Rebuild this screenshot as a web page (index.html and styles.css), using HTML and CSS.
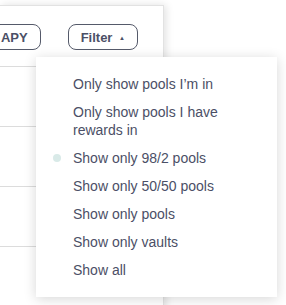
FILE: index.html
```html
<!DOCTYPE html>
<html lang="en">
    <head>
        <meta charset="UTF-8">
        <title>Pools</title>
        <link rel="stylesheet" href="styles.css">
    </head>
<body>

<div class="page">
    <div class="card">
        <div class="card-header">
            <button class="pill">APY</button>
            <button class="pill">Filter <span class="caret">&#9650;</span></button>
        </div>
        <div class="row"></div>
        <div class="row"></div>
        <div class="row"></div>
        <div class="row"></div>
    </div>

    <ul class="menu">
        <li>Only show pools I&rsquo;m in</li>
        <li>Only show pools I have rewards in</li>
        <li class="active">Show only 98/2 pools</li>
        <li>Show only 50/50 pools</li>
        <li>Show only pools</li>
        <li>Show only vaults</li>
        <li>Show all</li>
    </ul>
</div>

</body>
</html>
```

FILE: styles.css
```css
body {
    margin: 0;
    font-family: "Liberation Sans", Arial, sans-serif;
    color: #4b4f66;
    background: #fff;
}
.page {
    position: relative;
    height: 305px;
    overflow: hidden;
    padding-top: 5px;
    box-sizing: border-box;
}
.card {
    width: 164px;
    height: 320px;
    border-top: 1px solid #e2e2e2;
    border-right: 1px solid #e2e2e2;
    box-sizing: border-box;
    box-shadow: 2px 0 8px rgba(0, 0, 0, 0.12);
    overflow: hidden;
}
.card-header {
    height: 61px;
    display: flex;
    justify-content: flex-end;
    align-items: flex-start;
    gap: 27px;
    padding: 18px 25px 0 0;
    box-sizing: border-box;
    border-bottom: 1px solid #dcdcdc;
}
.pill {
    flex-shrink: 0;
    height: 26px;
    padding: 0 12px 0 12px;
    border: 1px solid #555a6a;
    border-radius: 8px;
    background: #fff;
    font-family: inherit;
    font-size: 13px;
    font-weight: bold;
    color: #4b4f66;
}
.caret {
    font-size: 6px;
    vertical-align: 2px;
    margin-left: 3px;
}
.row {
    height: 60px;
    box-sizing: border-box;
    border-bottom: 1px solid #dcdcdc;
}
.menu {
    position: absolute;
    left: 36px;
    top: 57px;
    width: 241px;
    height: 240px;
    margin: 0;
    padding: 18px 36px 0 37px;
    box-sizing: border-box;
    list-style: none;
    background: #fff;
    box-shadow: 0 2px 12px rgba(0, 0, 0, 0.16);
    display: flex;
    flex-direction: column;
    gap: 10px;
    font-size: 14px;
    line-height: 18px;
}
.menu li {
    position: relative;
}
.menu li.active::before {
    content: "";
    position: absolute;
    left: -20px;
    top: 5px;
    width: 8px;
    height: 8px;
    border-radius: 50%;
    background: #d9eae8;
}
```
